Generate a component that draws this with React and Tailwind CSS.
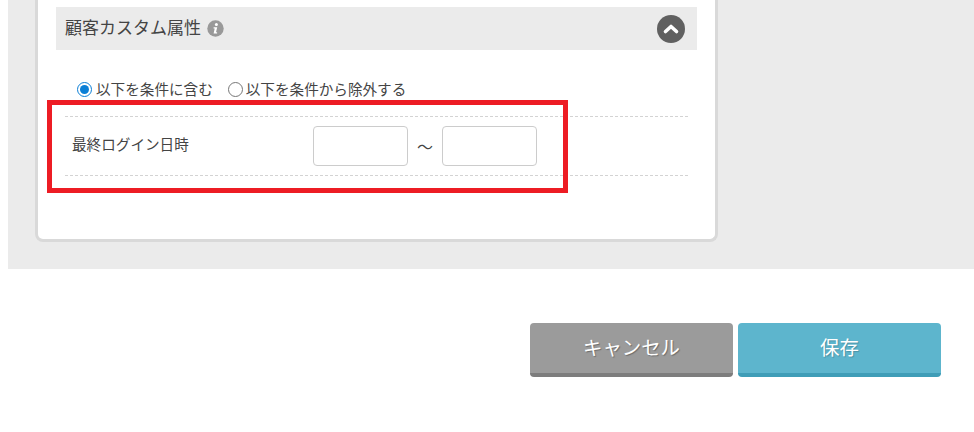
export default function App() {
  return (
    <div className="w-[974px] h-[432px] bg-white overflow-hidden relative font-['Noto_Sans_CJK_JP','Noto_Sans',sans-serif] text-[#333]">
      <div className="ml-2 h-[269px] bg-[#ebebeb] pl-[27px]">
        <div className="w-[683px] h-[242px] bg-white border-x-[3px] border-b-[3px] border-[#d9d9d9] rounded-b-[8px] pt-[7px] pl-[18px]">
          <div className="w-[641px] h-[43px] bg-[#ebebeb] flex items-center pl-[9px] pr-[12px]">
            <span className="text-[17px] leading-none text-[#444] pb-[4px]">顧客カスタム属性</span>
            <svg className="ml-[6px]" width="17" height="17" viewBox="0 0 17 17">
              <circle cx="8.5" cy="8.5" r="8.2" fill="#999" />
              <circle cx="9.4" cy="4.6" r="1.5" fill="#fff" />
              <path d="M6.6 7.2h3.6l-1.2 5h1.1v1.2H6.6l1.1-5H6.6z" fill="#fff" />
            </svg>
            <svg className="ml-auto" width="28" height="28" viewBox="0 0 28 28">
              <circle cx="14" cy="14" r="14" fill="#606060" />
              <path d="M8.5 16.5L14 11.5L19.5 16.5" fill="none" stroke="#fff" strokeWidth="3.6" strokeLinecap="round" strokeLinejoin="round" />
            </svg>
          </div>
          <div className="flex items-center h-[22px] mt-[28px] mb-[16px] ml-[21px] text-[14.6px] leading-none text-[#444]">
            <label className="flex items-center">
              <input type="radio" name="c" defaultChecked className="w-[15px] h-[15px] m-0 accent-[#0b7fd6]" />
              <span className="ml-[4px]">以下を条件に含む</span>
            </label>
            <label className="flex items-center ml-[15px]">
              <input type="radio" name="c" className="w-[15px] h-[15px] m-0" />
              <span className="ml-[3px]">以下を条件から除外する</span>
            </label>
          </div>
          <div className="w-[623px] ml-[9px] h-[60px] border-y border-dashed border-[#d3d3d3] flex items-center text-[14.6px]">
            <span className="w-[248px] pl-[7px] pb-[3px] leading-none text-[#444]">最終ログイン日時</span>
            <input className="w-[95px] h-[40px] border border-[#ccc] rounded-[4px] bg-white" />
            <span className="w-[34px] text-center text-[#444] text-[16px]">～</span>
            <input className="w-[95px] h-[40px] border border-[#ccc] rounded-[4px] bg-white" />
          </div>
        </div>
      </div>
      <div className="flex justify-end gap-[5px] pr-[33px] mt-[54px]">
        <button className="w-[203px] h-[54px] rounded-[4px] bg-[#9b9b9b] border-b-[4px] border-[#7d7d7d] text-white text-[19.4px] pb-[3px] leading-none [text-shadow:1px_1px_1px_rgba(0,0,0,0.3)]">キャンセル</button>
        <button className="w-[203px] h-[54px] rounded-[4px] bg-[#5db5cd] border-b-[4px] border-[#3f9db7] text-white text-[19.4px] pb-[3px] leading-none [text-shadow:1px_1px_1px_rgba(0,0,0,0.2)]">保存</button>
      </div>
      <div className="absolute left-[47px] top-[100px] w-[521px] h-[93px] border-[5px] border-[#ed1c24] pointer-events-none" />
    </div>
  );
}
